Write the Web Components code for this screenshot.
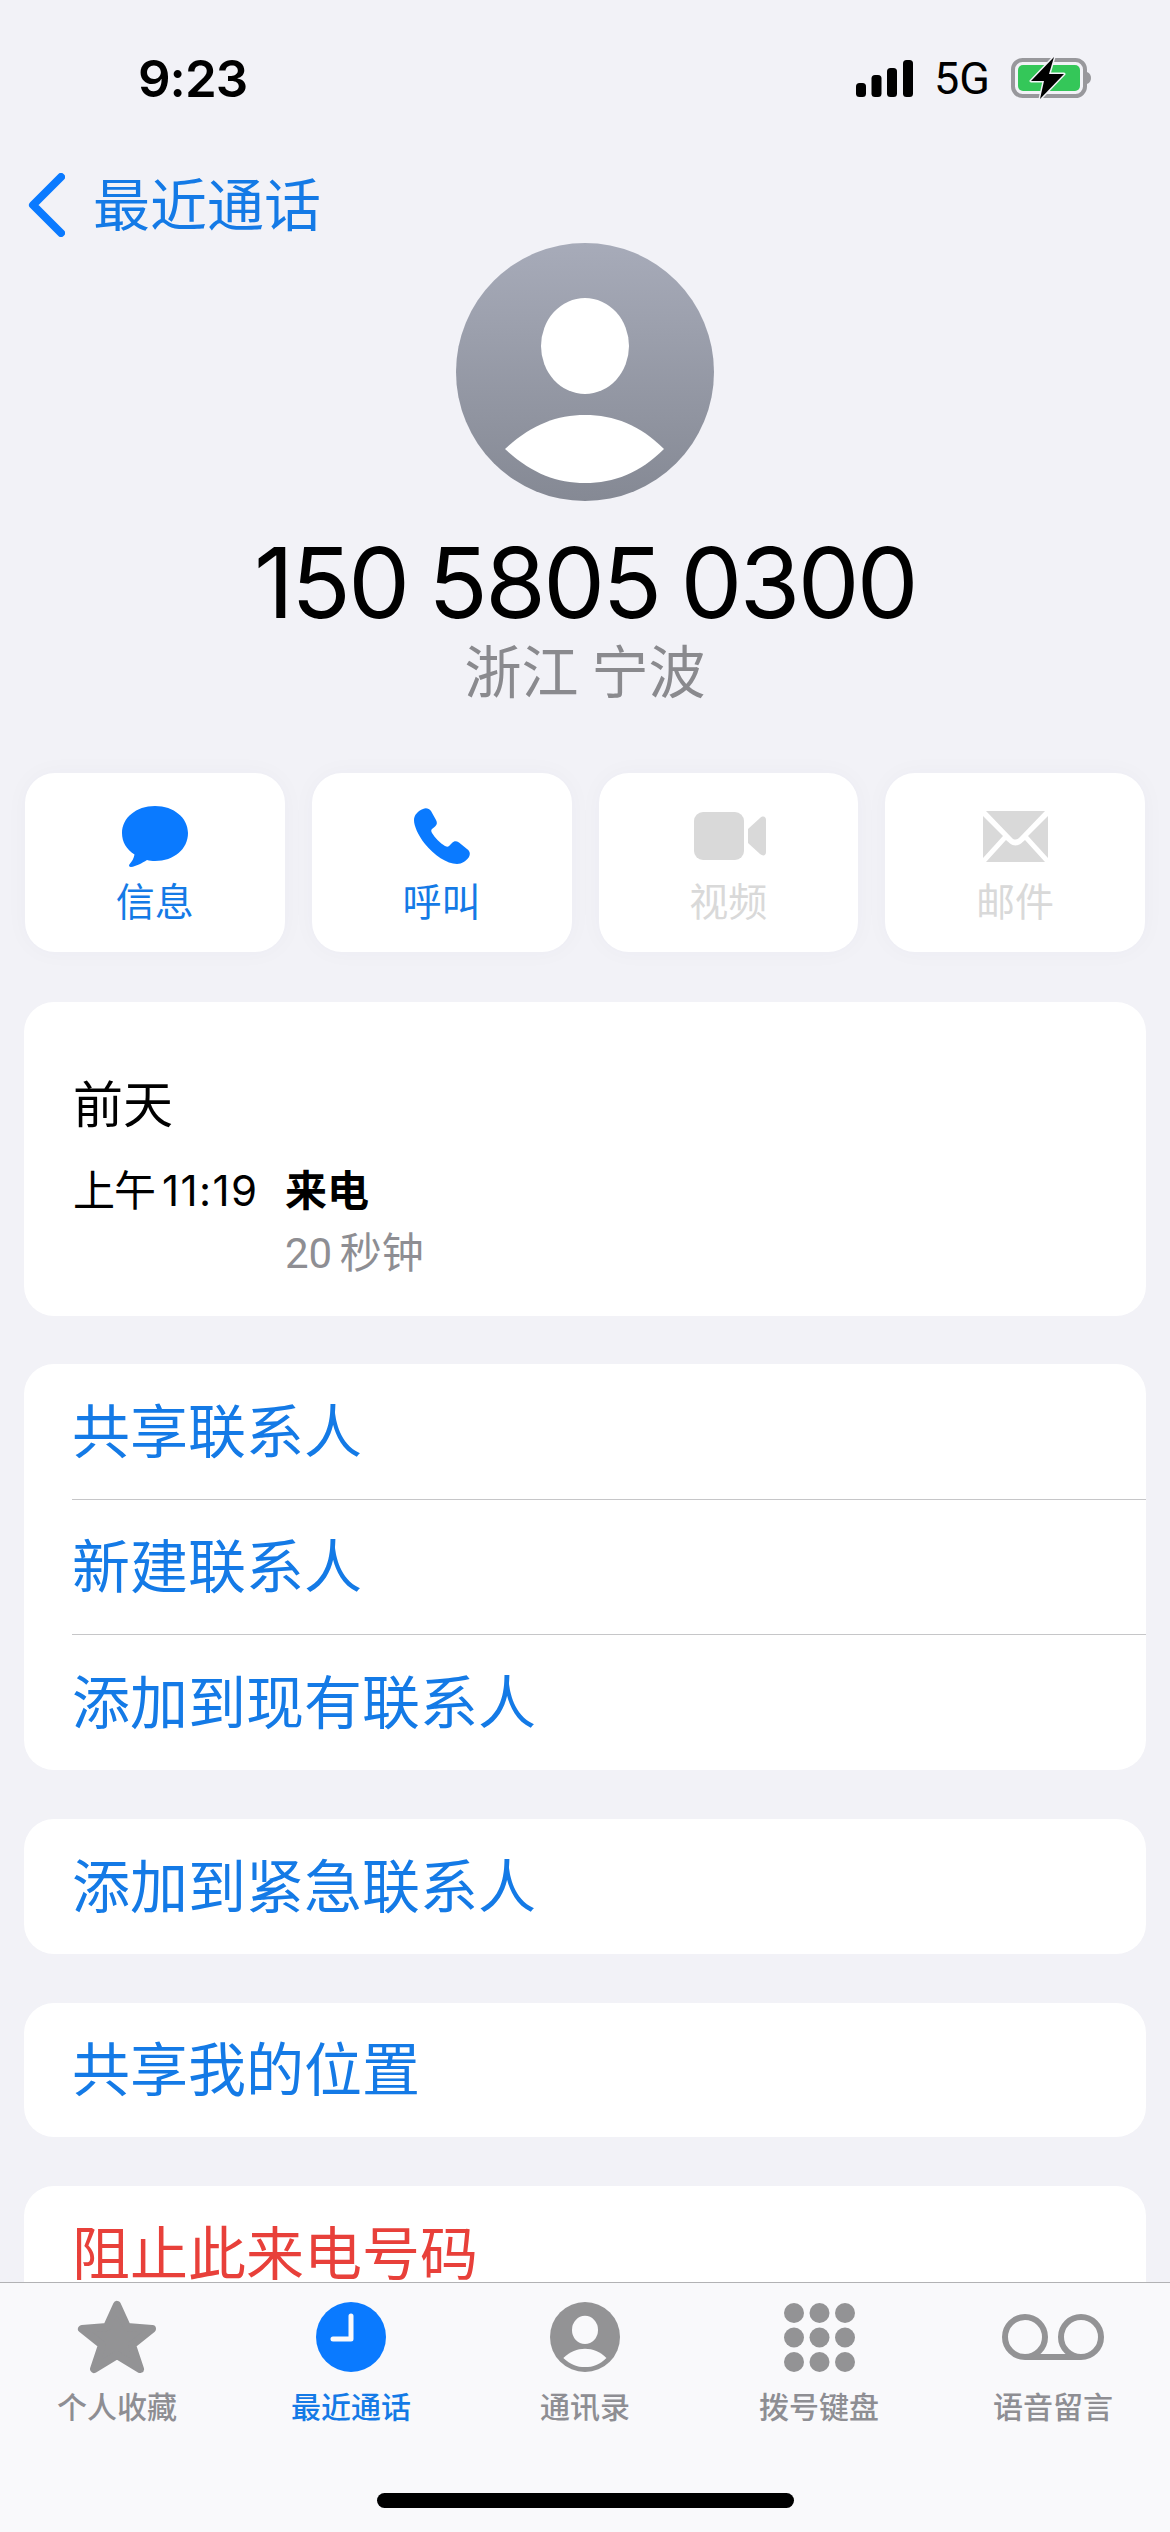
<!DOCTYPE html>
<html lang="zh-CN">
<head>
<meta charset="utf-8">
<title>Recents contact</title>
<style>
  html, body { margin: 0; padding: 0; background: #f2f2f7; }
</style>
</head>
<body>
<app-screen>
  <status-bar></status-bar>
  <nav-back label="最近通话"></nav-back>
  <contact-header number="150 5805 0300" place="浙江 宁波"></contact-header>
  <action-row>
    <action-button label="信息" icon="message"></action-button>
    <action-button label="呼叫" icon="phone"></action-button>
    <action-button label="视频" icon="video" disabled></action-button>
    <action-button label="邮件" icon="mail" disabled></action-button>
  </action-row>
  <call-info day="前天" ampm="上午" time="11:19" kind="来电" duration="20 秒钟"></call-info>
  <list-group>
    <list-row>共享联系人</list-row>
    <list-row>新建联系人</list-row>
    <list-row>添加到现有联系人</list-row>
  </list-group>
  <list-group><list-row>添加到紧急联系人</list-row></list-group>
  <list-group><list-row>共享我的位置</list-row></list-group>
  <list-group><list-row danger>阻止此来电号码</list-row></list-group>
  <tab-bar slot="bar">
    <tab-item label="个人收藏" icon="star"></tab-item>
    <tab-item label="最近通话" icon="clock" active></tab-item>
    <tab-item label="通讯录" icon="contact"></tab-item>
    <tab-item label="拨号键盘" icon="keypad"></tab-item>
    <tab-item label="语音留言" icon="voicemail"></tab-item>
  </tab-bar>
</app-screen>

<script>
const CJK = `"Noto Sans CJK SC", sans-serif`
const BLUE = "#147ae6"

class AppScreen extends HTMLElement {
  constructor() {
    super()
    this.attachShadow({ mode: "open" }).innerHTML = /* html */ `
      <style>
        :host {
          display: flex;
          flex-direction: column;
          width: 1170px;
          height: 2532px;
          overflow: hidden;
          background: #f2f2f7;
          font-family: Inter, ${CJK};
        }
        .content { flex: 1; min-height: 0; overflow: hidden; display: flex; flex-direction: column; }
      </style>
      <div class="content"><slot></slot></div>
      <slot name="bar"></slot>
    `
  }
}

class StatusBar extends HTMLElement {
  constructor() {
    super()
    this.attachShadow({ mode: "open" }).innerHTML = /* html */ `
      <style>
        :host {
          display: flex;
          align-items: center;
          justify-content: space-between;
          height: 156px;
          padding: 0 79px 0 138px;
          box-sizing: border-box;
          flex: none;
        }
        .time { font: 600 51px/1 Inter, sans-serif; color: #000; letter-spacing: -1px; }
        .right { display: flex; align-items: center; gap: 21px; }
        .five { font: 400 45px/1 Roboto, sans-serif; color: #000; }
        svg { display: block; }
      </style>
      <span class="time">9:23</span>
      <div class="right">
        <svg width="57" height="37" viewBox="0 0 57 37" fill="#000">
          <rect x="0" y="23" width="10" height="14" rx="3.5"/>
          <rect x="15.5" y="15" width="10" height="22" rx="3.5"/>
          <rect x="31" y="8" width="10" height="29" rx="3.5"/>
          <rect x="47" y="0" width="10" height="37" rx="3.5"/>
        </svg>
        <span class="five">5G</span>
        <svg width="80" height="42" viewBox="0 0 80 42">
          <rect x="2" y="3" width="72" height="36" rx="9.5" fill="none" stroke="#98989c" stroke-width="4"/>
          <path d="M76 15c3 1 4 3.500 4 6s-1 5-4 6z" fill="#98989c"/>
          <rect x="7" y="8" width="62" height="26" rx="5" fill="#34c759"/>
          <path d="M43 0 L20 24 H33 L29 42 L53 17 H38 Z" fill="#000" stroke="#f2f2f7" stroke-width="3" stroke-linejoin="round" paint-order="stroke"/>
        </svg>
      </div>
    `
  }
}

class NavBack extends HTMLElement {
  constructor() {
    super()
    this.attachShadow({ mode: "open" }).innerHTML = /* html */ `
      <style>
        :host {
          display: flex;
          align-items: center;
          gap: 28px;
          height: 74px;
          margin: 12px 0 1px;
          padding-left: 28px;
          flex: none;
          color: ${BLUE};
          font: 400 57px/1 ${CJK};
        }
        svg { display: block; flex: none; }
        span { margin-top: -7px; }
      </style>
      <svg width="37" height="64" viewBox="0 0 37 64" fill="none" stroke="#0a7aff" stroke-width="8" stroke-linecap="round" stroke-linejoin="round">
        <path d="M33 4 L5 32 L33 60"/>
      </svg>
      <span>${this.getAttribute("label")}</span>
    `
  }
}

class ContactHeader extends HTMLElement {
  constructor() {
    super()
    this.attachShadow({ mode: "open" }).innerHTML = /* html */ `
      <style>
        :host {
          display: flex;
          flex-direction: column;
          align-items: center;
          flex: none;
        }
        svg { display: block; }
        .number { font: 400 98px/110px Inter, sans-serif; color: #000; margin-top: 27px; letter-spacing: -2.6px; word-spacing: -4px; }
        .place { font: 400 57px/70px "Liberation Sans", ${CJK}; color: #8a8a8e; margin-top: 0; word-spacing: -3px; }
      </style>
      <svg width="258" height="258" viewBox="0 0 258 258">
        <defs>
          <linearGradient id="ava" x1="0" y1="0" x2="0" y2="1">
            <stop offset="0" stop-color="#a7abb9"/>
            <stop offset="1" stop-color="#858994"/>
          </linearGradient>
        </defs>
        <circle cx="129" cy="129" r="129" fill="url(#ava)"/>
        <ellipse cx="129" cy="103" rx="44" ry="48" fill="#fff"/>
        <path d="M49 206 C75 182 100 172 129 172 C158 172 184 182 208 206 C184 230 158 240 129 240 C100 240 75 230 49 206Z" fill="#fff"/>
      </svg>
      <span class="number">${this.getAttribute("number")}</span>
      <span class="place">${this.getAttribute("place")}</span>
    `
  }
}

class ActionRow extends HTMLElement {
  constructor() {
    super()
    this.attachShadow({ mode: "open" }).innerHTML = /* html */ `
      <style>
        :host {
          display: grid;
          grid-template-columns: repeat(4, 1fr);
          gap: 27px;
          margin: 65px 25px 0;
          flex: none;
        }
      </style>
      <slot></slot>
    `
  }
}

const ACTION_ICONS = {
  message: `<svg width="68" height="61" viewBox="0 0 68 61"><path d="M34 0 C53 0 67 12 67 27 C67 43 53 55 34 55 C31 55 28.500 54.700 26 54 C21 57 15 60.500 10 61 C8 61 7.500 59.500 8.500 58.300 C11 55.500 13 52 13.500 48.500 C5.500 43.500 1 36 1 27 C1 12 15 0 34 0Z" fill="#0a7aff"/></svg>`,
  phone: `<svg width="56" height="56" viewBox="0 0 56 56"><path d="M9 1 C12 -.5 15 .5 17 3 L22 12 C23.500 15 23 17 20.500 19 L18 21 C17 22 17 23 18 25 C21 30 26 35 31 38 C33 39 34 39 35 38 L38 35 C40 33 42 32.500 45 34.500 L53 41 C56 43 56.500 46 55 49 C52 53 48 56 43 56 C33 56 20 47 11 36 C4 27 0 18 0 12 C0 7 4 3 9 1Z" fill="#0a7aff"/></svg>`,
  video: `<svg width="72" height="48" viewBox="0 0 72 48" fill="#d9d9d9" style="margin-left:4px"><rect width="50" height="48" rx="9"/><path d="M54 17 L66 6 C69 3.500 72 4.500 72 8 V40 C72 43.500 69 44.500 66 42 L54 31Z"/></svg>`,
  mail: `<svg width="65" height="51" viewBox="0 0 65 51" fill="#d9d9d9"><path d="M3 0 H62 L36 27 C34 29 31 29 29 27Z"/><path d="M0 5 V47 L20 25Z"/><path d="M65 5 V47 L45 25Z"/><path d="M3 51 L23 29 L27 32.500 C30 35 35 35 38 32.500 L42 29 L62 51Z"/></svg>`
}

class ActionButton extends HTMLElement {
  constructor() {
    super()
    const off = this.hasAttribute("disabled")
    this.attachShadow({ mode: "open" }).innerHTML = /* html */ `
      <style>
        :host {
          display: flex;
          flex-direction: column;
          align-items: center;
          height: 179px;
          background: #fff;
          border-radius: 30px;
          box-shadow: 0 0 24px rgba(40, 40, 90, .03);
          color: ${off ? "#d9d9d9" : BLUE};
        }
        .icon { height: 62px; margin-top: 32px; display: flex; align-items: center; justify-content: center; }
        svg { display: block; }
        .label { font: 400 39px/50px ${CJK}; margin-top: 7px; }
      </style>
      <div class="icon">${ACTION_ICONS[this.getAttribute("icon")]}</div>
      <span class="label">${this.getAttribute("label")}</span>
    `
  }
}

class CallInfo extends HTMLElement {
  constructor() {
    super()
    this.attachShadow({ mode: "open" }).innerHTML = /* html */ `
      <style>
        :host {
          display: block;
          margin: 50px 24px -1px;
          height: 314px;
          box-sizing: border-box;
          padding: 64px 49px 0;
          background: #fff;
          border-radius: 30px;
          flex: none;
        }
        .day { font: 400 50px/70px ${CJK}; color: #000; margin-bottom: 31px; }
        .grid { display: grid; grid-template-columns: 212px 1fr; row-gap: 15px; font-size: 42px; line-height: 48px; color: #000; }
        .ampm { letter-spacing: -1px; }
        .time { letter-spacing: 1.4px; margin-left: 7px; }
        .kind { font-weight: 700; }
        .dur { grid-column: 2; color: #8e8e93; font-family: Roboto, ${CJK}; word-spacing: -3px; }
      </style>
      <div class="day">${this.getAttribute("day")}</div>
      <div class="grid">
        <span><span class="ampm">${this.getAttribute("ampm")}</span><span class="time">${this.getAttribute("time")}</span></span>
        <span class="kind">${this.getAttribute("kind")}</span>
        <span class="dur">${this.getAttribute("duration")}</span>
      </div>
    `
  }
}

class ListGroup extends HTMLElement {
  constructor() {
    super()
    this.attachShadow({ mode: "open" }).innerHTML = /* html */ `
      <style>
        :host {
          display: flex;
          flex-direction: column;
          margin: 49px 24px 0;
          background: #fff;
          border-radius: 30px;
          flex: none;
        }
        ::slotted(list-row:not(:first-child)) { border-top: 1px solid #c6c6c8; }
      </style>
      <slot></slot>
    `
  }
}

class ListRow extends HTMLElement {
  constructor() {
    super()
    this.attachShadow({ mode: "open" }).innerHTML = /* html */ `
      <style>
        :host {
          display: flex;
          align-items: center;
          height: 134.67px;
          box-sizing: content-box;
          margin-left: 48px;
          font: 400 58px/1 ${CJK};
          color: ${this.hasAttribute("danger") ? "#e8403a" : BLUE};
        }
        .text { margin-top: -7px; }
      </style>
      <span class="text"><slot></slot></span>
    `
  }
}

class TabBar extends HTMLElement {
  constructor() {
    super()
    this.attachShadow({ mode: "open" }).innerHTML = /* html */ `
      <style>
        :host {
          display: flex;
          flex-direction: column;
          height: 250px;
          box-sizing: border-box;
          background: #f9f9fb;
          border-top: 1px solid #b2b2b4;
          flex: none;
        }
        .tabs { display: grid; grid-template-columns: repeat(5, 1fr); height: 210px; }
        .home { width: 417px; height: 15px; border-radius: 8px; background: #000; margin: 0 auto; }
      </style>
      <div class="tabs"><slot></slot></div>
      <div class="home"></div>
    `
  }
}

const TAB_ICONS = {
  star: `<svg width="80" height="74" viewBox="0 0 80 74"><path d="M40 5 L50 27 L75 29 L55 45 L63 69 L40 55 L17 69 L25 45 L5 29 L30 27Z" fill="#939395" stroke="#939395" stroke-width="8" stroke-linejoin="round"/></svg>`,
  clock: `<svg width="70" height="70" viewBox="0 0 70 70"><circle cx="35" cy="35" r="35" fill="#0a7aff"/><path d="M35 14 V37 H17" fill="none" stroke="#f9f9fb" stroke-width="5" stroke-linecap="round" stroke-linejoin="round"/></svg>`,
  contact: `<svg width="70" height="70" viewBox="0 0 258 258"><circle cx="129" cy="129" r="129" fill="#939395"/><ellipse cx="129" cy="103" rx="48" ry="52" fill="#f9f9fb"/><path d="M49 206 C75 182 100 172 129 172 C158 172 184 182 208 206 C184 230 158 240 129 240 C100 240 75 230 49 206Z" fill="#f9f9fb"/></svg>`,
  keypad: `<svg width="71" height="69" viewBox="0 0 71 69" fill="#939395">
    <circle cx="10" cy="10" r="10"/><circle cx="35.500" cy="10" r="10"/><circle cx="61" cy="10" r="10"/>
    <circle cx="10" cy="34.500" r="10"/><circle cx="35.500" cy="34.500" r="10"/><circle cx="61" cy="34.500" r="10"/>
    <circle cx="10" cy="59" r="10"/><circle cx="35.500" cy="59" r="10"/><circle cx="61" cy="59" r="10"/></svg>`,
  voicemail: `<svg width="102" height="46" viewBox="0 0 102 46" fill="none" stroke="#939395" stroke-width="6"><circle cx="23" cy="23" r="20"/><circle cx="79" cy="23" r="20"/><path d="M23 43 H79"/></svg>`
}

class TabItem extends HTMLElement {
  constructor() {
    super()
    const on = this.hasAttribute("active")
    this.attachShadow({ mode: "open" }).innerHTML = /* html */ `
      <style>
        :host {
          display: flex;
          flex-direction: column;
          align-items: center;
          color: ${on ? BLUE : "#8e8e93"};
        }
        .icon { display: flex; align-items: center; justify-content: center; height: 76px; margin-top: 16px; }
        svg { display: block; }
        .label { font: 500 30px/40px ${CJK}; margin-top: 10px; }
      </style>
      <div class="icon">${TAB_ICONS[this.getAttribute("icon")]}</div>
      <span class="label">${this.getAttribute("label")}</span>
    `
  }
}

customElements.define("app-screen", AppScreen)
customElements.define("status-bar", StatusBar)
customElements.define("nav-back", NavBack)
customElements.define("contact-header", ContactHeader)
customElements.define("action-row", ActionRow)
customElements.define("action-button", ActionButton)
customElements.define("call-info", CallInfo)
customElements.define("list-group", ListGroup)
customElements.define("list-row", ListRow)
customElements.define("tab-bar", TabBar)
customElements.define("tab-item", TabItem)
</script>
</body>
</html>
